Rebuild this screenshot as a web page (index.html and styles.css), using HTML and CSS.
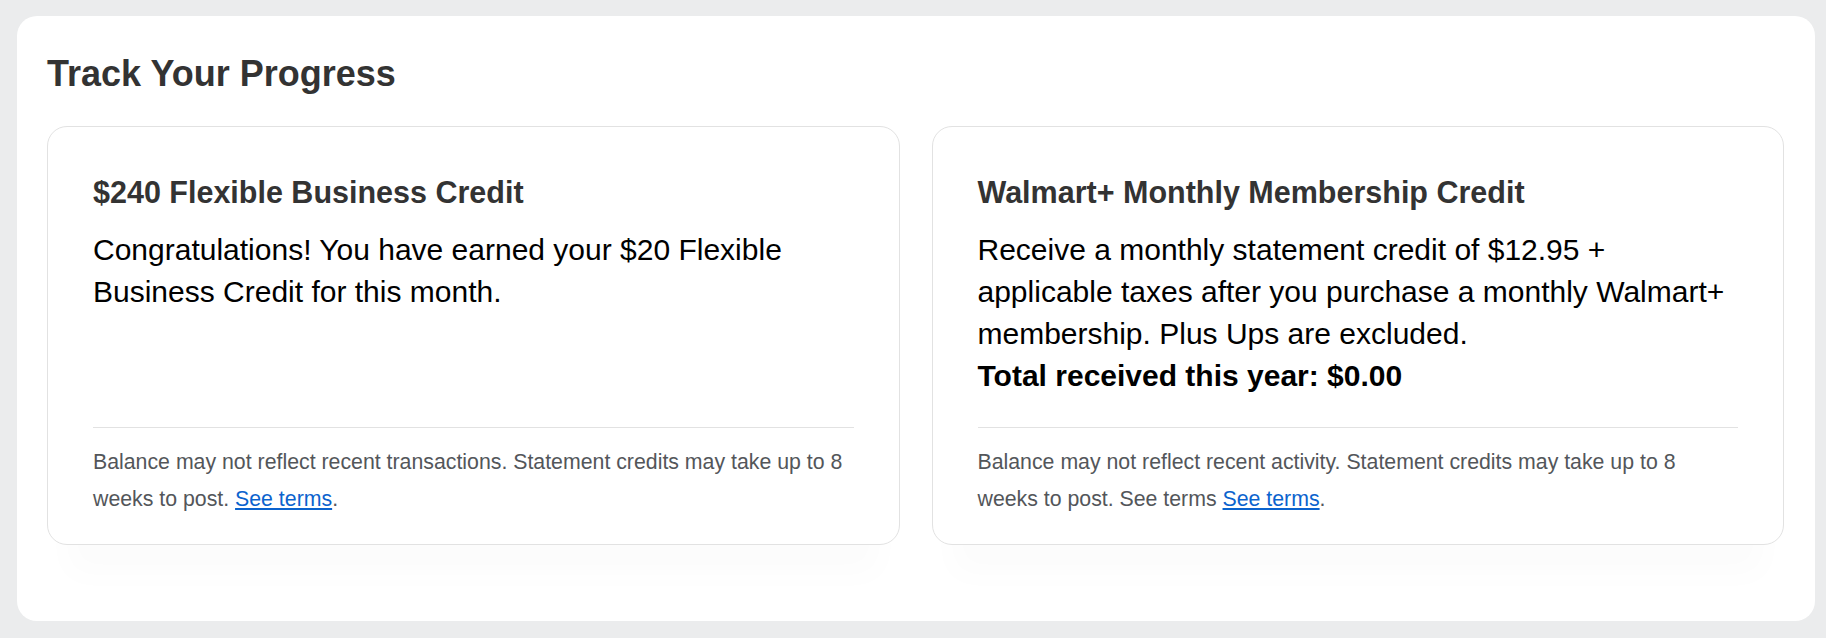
FILE: index.html
```html
<!DOCTYPE html>
<html lang="en">
<head>
  <meta charset="UTF-8" />
  <meta name="viewport" content="width=device-width, initial-scale=1.0" />
  <title>Track Your Progress</title>
  <link rel="stylesheet" href="styles.css">
</head>
<body>
  <section class="panel">
    <h1>Track Your Progress</h1>
    <div class="cards">
      <div class="card">
        <h2>$240 Flexible Business Credit</h2>
        <p class="desc">Congratulations! You have earned your $20 Flexible Business Credit for this month.</p>
        <div class="foot">
          <p>Balance may not reflect recent transactions. Statement credits may take up to 8 weeks to post. <a href="#">See terms</a>.</p>
        </div>
      </div>
      <div class="card">
        <h2>Walmart+ Monthly Membership Credit</h2>
        <p class="desc">Receive a monthly statement credit of $12.95 + applicable taxes after you purchase a monthly Walmart+ membership. Plus Ups are excluded.<br><strong>Total received this year: $0.00</strong></p>
        <div class="foot">
          <p>Balance may not reflect recent activity. Statement credits may take up to 8 weeks to post. See terms <a href="#">See terms</a>.</p>
        </div>
      </div>
    </div>
  </section>
</body>
</html>
```

FILE: styles.css
```css
body {
  font-family: "Liberation Sans", Arial, sans-serif;
  background-color: #ebeced;
  margin: 0;
  padding: 16px 11px 18px 17px;
}
.panel {
  background: white;
  border-radius: 20px;
  padding: 36px 31px 76px 30px;
}
h1 {
  margin: 0 0 30px 0;
  font-size: 36px;
  line-height: 44px;
  color: #333;
}
.cards {
  display: grid;
  grid-template-columns: 1fr 1fr;
  gap: 32px;
}
.card {
  display: flex;
  flex-direction: column;
  border: 1px solid #e2e2e2;
  border-radius: 20px;
  padding: 47px 45px 26px 45px;
  box-shadow: 0 50px 30px -20px rgba(0, 0, 0, 0.014);
}
h2 {
  margin: 0;
  font-size: 30.5px;
  line-height: 36px;
  color: #333;
}
.desc {
  margin: 19px 0 0 0;
  font-size: 30px;
  line-height: 42px;
  color: #000;
}
.foot {
  margin-top: auto;
  padding-top: 30px;
}
.foot p {
  margin: 0;
  border-top: 1px solid #e2e2e2;
  padding-top: 16px;
  font-size: 21.3px;
  line-height: 37px;
  color: #53565a;
}
a {
  color: #0b63ce;
  text-decoration: underline;
}
```
